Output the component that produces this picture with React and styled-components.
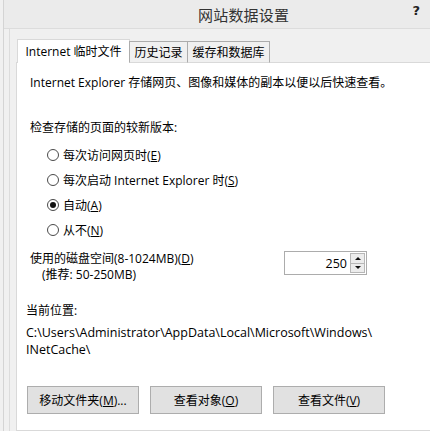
import React from 'react';
import styled, { createGlobalStyle } from 'styled-components';

const GlobalStyle = createGlobalStyle`
  html, body {
    margin: 0;
    padding: 0;
    background: #f0f0f0;
  }
  body {
    width: 430px;
    height: 431px;
    overflow: hidden;
    font-family: "Open Sans", "Noto Sans CJK SC", sans-serif;
    font-size: 12px;
    color: #000;
  }
`;

const Window = styled.div`
  margin-left: 3px;
  height: 431px;
  border-left: 1px solid #d4d4d4;
  background: #f0f0f0;
  display: flex;
  flex-direction: column;
`;

const TitleBar = styled.div`
  height: 29px;
  flex-shrink: 0;
  display: flex;
  align-items: center;
  justify-content: space-between;
  padding: 0 10px 0 194px;
  background: #ebebeb;
  border-bottom: 1px solid #dcdcdc;
  box-sizing: border-box;
`;

const Title = styled.div`
  font-family: "Noto Sans CJK SC", sans-serif;
  font-size: 15px;
  color: #333;
  letter-spacing: 0.2px;
`;

const Help = styled.div`
  font-family: "DejaVu Sans", sans-serif;
  font-weight: bold;
  font-size: 13px;
  color: #222;
  margin-bottom: 8px;
`;

const Body = styled.div`
  flex: 1;
  margin-left: 5px;
  border-left: 1px solid #dcdcdc;
  padding: 10px 0 0 6px;
  display: flex;
  flex-direction: column;
`;

const TabStrip = styled.div`
  display: flex;
  align-items: flex-end;
  margin-left: 1px;
  margin-bottom: -1px;
  position: relative;
  z-index: 1;
`;

const Tab = styled.div`
  box-sizing: border-box;
  width: ${(p) => p.$width}px;
  height: ${(p) => (p.$active ? 24 : 22)}px;
  display: flex;
  align-items: center;
  justify-content: center;
  background: ${(p) => (p.$active ? '#fff' : '#f0f0f0')};
  border: 1px solid ${(p) => (p.$active ? '#d9d9d9' : '#acacac')};
  border-bottom: ${(p) => (p.$active ? 'none' : '1px solid #d9d9d9')};
  margin-left: ${(p) => (p.$first ? 0 : -1)}px;
  padding-bottom: ${(p) => (p.$active ? 2 : 0)}px;
  white-space: nowrap;
`;

const Panel = styled.div`
  flex: 1;
  background: #fff;
  border: 1px solid #d9d9d9;
  border-right: none;
  padding: 11px 0 11px 9px;
  display: flex;
  flex-direction: column;
`;

const Line = styled.div`
  line-height: ${(p) => p.$lh || 17}px;
  font-size: ${(p) => p.$size || 12}px;
  padding-left: ${(p) => p.$indent || 0}px;
  margin-top: ${(p) => p.$mt || 0}px;
  white-space: nowrap;
`;

const Key = styled.span`
  text-decoration: underline;
  text-underline-offset: 1px;
`;

const RadioGroup = styled.div`
  display: flex;
  flex-direction: column;
  margin-top: 6px;
  padding-left: 21px;
`;

const RadioRow = styled.div`
  height: 25px;
  display: flex;
  align-items: center;
  gap: 4px;
  white-space: nowrap;
`;

const RadioCircle = styled.span`
  width: 12px;
  height: 12px;
  box-sizing: border-box;
  border-radius: 50%;
  border: 1px solid #4a4a4a;
  background: #fff;
  display: flex;
  align-items: center;
  justify-content: center;

  &::after {
    content: '';
    display: ${(p) => (p.$checked ? 'block' : 'none')};
    width: 6px;
    height: 6px;
    border-radius: 50%;
    background: #111;
  }
`;

const DiskRow = styled.div`
  display: flex;
  align-items: flex-start;
  margin-top: 9px;
  padding-left: 4px;
`;

const DiskLabel = styled.div`
  width: 254px;
  flex-shrink: 0;
`;

const SpinBox = styled.div`
  width: 83px;
  height: 24px;
  box-sizing: border-box;
  border: 1px solid #acacac;
  display: flex;
  align-items: center;
  padding: 0 1px 0 4px;
`;

const SpinValue = styled.div`
  flex: 1;
  text-align: right;
  padding-right: 3px;
  font-size: 12.5px;
`;

const SpinButtons = styled.div`
  display: flex;
  flex-direction: column;
  width: 15px;
  height: 20px;
`;

const SpinButton = styled.div`
  flex: 1;
  box-sizing: border-box;
  border: 1px solid #b7b7b7;
  margin-top: ${(p) => (p.$down ? -1 : 0)}px;
  background: #ececec;
  display: flex;
  align-items: center;
  justify-content: center;

  &::after {
    content: '';
    border-left: 3px solid transparent;
    border-right: 3px solid transparent;
    ${(p) => (p.$down ? 'border-top: 3px solid #111;' : 'border-bottom: 3px solid #111;')}
  }
`;

const ButtonRow = styled.div`
  display: flex;
  gap: 11px;
  margin-top: 28px;
  padding-left: 1px;
`;

const Button = styled.div`
  width: 112px;
  height: 28px;
  box-sizing: border-box;
  border: 1px solid #adadad;
  background: #e1e1e1;
  display: flex;
  align-items: center;
  justify-content: center;
  white-space: nowrap;
`;

const radios = [
  { label: '每次访问网页时', key: 'E' },
  { label: '每次启动 Internet Explorer 时', key: 'S' },
  { label: '自动', key: 'A', checked: true },
  { label: '从不', key: 'N' },
];

export default function App() {
  return (
    <>
      <GlobalStyle />
      <Window>
        <TitleBar>
          <Title>网站数据设置</Title>
          <Help>?</Help>
        </TitleBar>
        <Body>
          <TabStrip>
            <Tab $active $first $width={113}>Internet 临时文件</Tab>
            <Tab $width={59}>历史记录</Tab>
            <Tab $width={83}>缓存和数据库</Tab>
          </TabStrip>
          <Panel>
            <Line $indent={4}>Internet Explorer 存储网页、图像和媒体的副本以便以后快速查看。</Line>
            <Line $indent={4} $mt={28}>检查存储的页面的较新版本:</Line>
            <RadioGroup>
              {radios.map((r) => (
                <RadioRow key={r.key}>
                  <RadioCircle $checked={r.checked} />
                  <span>
                    {r.label}(<Key>{r.key}</Key>)
                  </span>
                </RadioRow>
              ))}
            </RadioGroup>
            <DiskRow>
              <DiskLabel>
                <Line $lh={16}>使用的磁盘空间(8-1024MB)(<Key>D</Key>)</Line>
                <Line $lh={16} $indent={12}>(推荐: 50-250MB)</Line>
              </DiskLabel>
              <SpinBox>
                <SpinValue>250</SpinValue>
                <SpinButtons>
                  <SpinButton />
                  <SpinButton $down />
                </SpinButtons>
              </SpinBox>
            </DiskRow>
            <Line $mt={19}>当前位置:</Line>
            <Line $mt={5} $size={12.5}>C:\Users\Administrator\AppData\Local\Microsoft\Windows\</Line>
            <Line $size={12.5}>INetCache\</Line>
            <ButtonRow>
              <Button>移动文件夹(<Key>M</Key>)...</Button>
              <Button>查看对象(<Key>O</Key>)</Button>
              <Button>查看文件(<Key>V</Key>)</Button>
            </ButtonRow>
          </Panel>
        </Body>
      </Window>
    </>
  );
}
